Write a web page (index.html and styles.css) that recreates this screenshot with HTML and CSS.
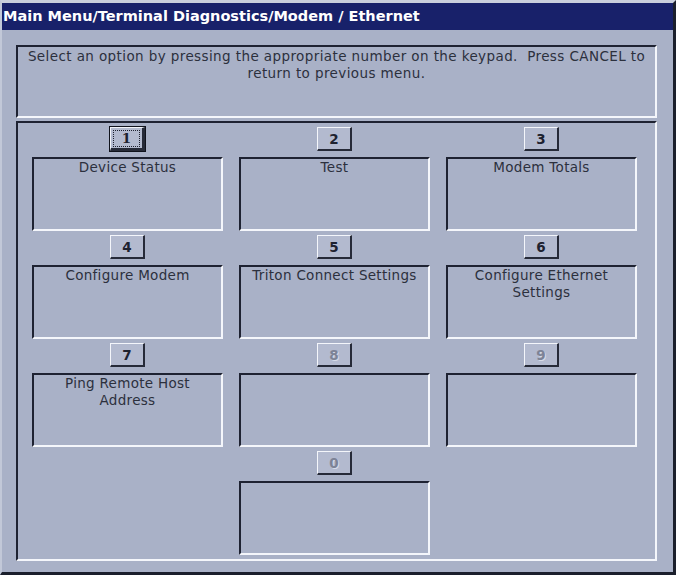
FILE: index.html
```html
<!DOCTYPE html>
<html lang="en">
<head>
  <meta charset="UTF-8">
  <title>Modem / Ethernet</title>
  <link rel="stylesheet" href="styles.css">
</head>
<body>
  <div class="window">
    <div class="titlebar">Main Menu/Terminal Diagnostics/Modem / Ethernet</div>
    <div class="content">
      <div class="prompt">Select an option by pressing the appropriate number on the keypad.&nbsp; Press CANCEL to<br>return to previous menu.</div>

      <div class="menu">
        <div class="item">
          <button class="key default"><span>1</span></button>
          <div class="label">Device Status</div>
        </div>
        <div class="item">
          <button class="key"><span>2</span></button>
          <div class="label">Test</div>
        </div>
        <div class="item">
          <button class="key"><span>3</span></button>
          <div class="label">Modem Totals</div>
        </div>

        <div class="item">
          <button class="key"><span>4</span></button>
          <div class="label">Configure Modem</div>
        </div>
        <div class="item">
          <button class="key"><span>5</span></button>
          <div class="label">Triton Connect Settings</div>
        </div>
        <div class="item">
          <button class="key"><span>6</span></button>
          <div class="label">Configure Ethernet<br>Settings</div>
        </div>

        <div class="item">
          <button class="key"><span>7</span></button>
          <div class="label">Ping Remote Host<br>Address</div>
        </div>
        <div class="item">
          <button class="key" disabled><span>8</span></button>
          <div class="label"></div>
        </div>
        <div class="item">
          <button class="key" disabled><span>9</span></button>
          <div class="label"></div>
        </div>

        <div class="item col-2">
          <button class="key" disabled><span>0</span></button>
          <div class="label"></div>
        </div>
      </div>
    </div>
  </div>
</body>
</html>
```

FILE: styles.css
```css
html, body {
  margin: 0;
  padding: 0;
  height: 100%;
}
body {
  background: #a9b1c7;
  font-family: "DejaVu Sans", Verdana, sans-serif;
  color: #2c303d;
}
.window {
  box-sizing: border-box;
  width: 676px;
  height: 575px;
  background: #a9b1c7;
  border-top: 3px solid #c9cfdd;
  border-left: 2px solid #c2c8d8;
  border-right: 3px solid #1b1f2c;
  border-bottom: 3px solid #1b1f2c;
}
.titlebar {
  height: 27px;
  line-height: 27px;
  background: #18216a;
  color: #fff;
  font-weight: bold;
  font-size: 14.5px;
  padding-left: 1px;
  white-space: nowrap;
}
.content {
  padding: 15px 16px 15px 14px;
}

/* sunken frames */
.prompt, .menu, .label {
  border-top: 2px solid #1e2232;
  border-left: 2px solid #1e2232;
  border-right: 2px solid #f4f6fb;
  border-bottom: 2px solid #f4f6fb;
}
.prompt {
  height: 68px;
  padding: 1px 0 0;
  text-align: center;
  font-size: 13.5px;
  letter-spacing: 0.4px;
  line-height: 17px;
  white-space: nowrap;
}
.menu {
  margin-top: 3px;
  padding: 4px 17px 4px 14px;
  display: grid;
  grid-template-columns: repeat(3, 191px);
  column-gap: 16px;
  row-gap: 4px;
}
.item {
  display: flex;
  flex-direction: column;
  align-items: center;
}
.col-2 {
  grid-column: 2;
}
.label {
  box-sizing: border-box;
  width: 100%;
  height: 74px;
  margin-top: 6px;
  padding-top: 0;
  text-align: center;
  font-size: 13.5px;
  letter-spacing: 0.3px;
  line-height: 17px;
}

/* number keys */
.key {
  box-sizing: border-box;
  width: 35px;
  height: 24px;
  padding: 0;
  background: #b3bacf;
  border-top: 1px solid #f4f6fb;
  border-left: 1px solid #f4f6fb;
  border-right: 2px solid #262a38;
  border-bottom: 2px solid #262a38;
  font-family: "DejaVu Sans", sans-serif;
  font-weight: bold;
  font-size: 13.5px;
  color: #1e2230;
}
.key span {
  display: block;
  line-height: 20px;
}
.key.default {
  outline: 1px solid #0f121c;
  border-right-width: 3px;
  border-bottom-width: 3px;
}
.key.default span {
  margin: 2px;
  line-height: 15px;
  border: 1px dotted #1e2230;
  font-family: "DejaVu Serif", serif;
}
.key:disabled {
  color: #7d8396;
  text-shadow: 1px 1px 0 #d6dbe8;
}
```
